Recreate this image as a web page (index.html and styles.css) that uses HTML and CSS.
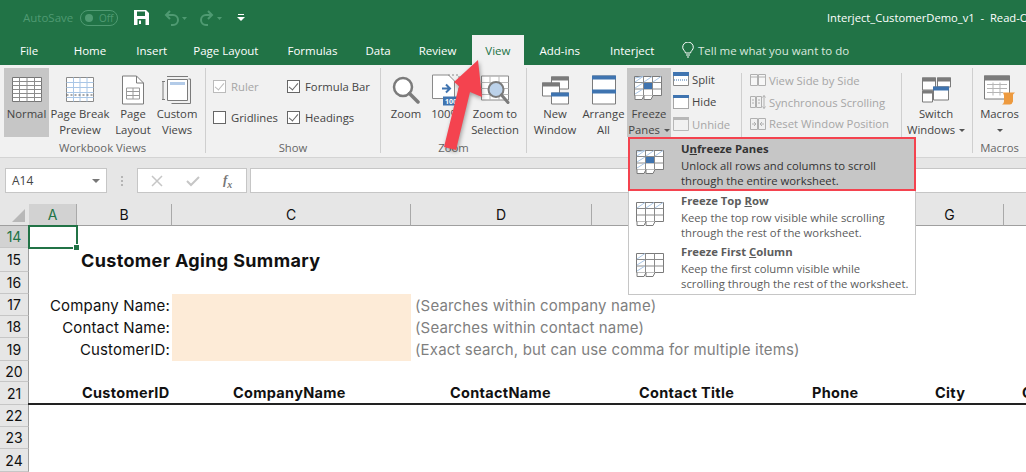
FILE: index.html
```html
<!DOCTYPE html>
<html lang="en">
<head>
<meta charset="UTF-8" />
<title>Interject_CustomerDemo_v1 - Read-Only</title>
<link rel="stylesheet" href="styles.css">
</head>
<body>
<svg class="defs" width="0" height="0">
  <symbol id="freeze-base" viewBox="0 0 30 28">
    <path d="M.5.5h27v19h-27z" fill="#fff" stroke="#7b7b7b"/>
    <path d="M.5 6.5h27M.5 13h27M9.5.5v19M18.5.5v19" fill="none" stroke="#8a8a8a"/>
    <path d="M1 19.5v4h7l2-4M10 19.5v4h7l2-4" fill="#fff" stroke="#7b7b7b"/>
  </symbol>
</svg>

<div class="app">
  <div class="titlebar">
    <span class="autosave">AutoSave</span>
    <span class="toggle"><i></i>Off</span>
    <svg class="qat-save" width="15" height="15" viewBox="0 0 15 15"><path fill="#fff" fill-rule="evenodd" d="M0 0h12l3 3v12H0zM3 1.500v4.500h8V1.500zM3.500 9v6h8V9zM5 10.500h2V14H5z"/></svg>
    <svg class="qat-undo" width="24" height="16" viewBox="0 0 24 16"><path d="M6 1 2 5l4 4M2 5h7a5 5 0 0 1 0 10H7" fill="none" stroke="#4f9a72" stroke-width="2"/><path d="M18 7h5l-2.500 3z" fill="#4f9a72"/></svg>
    <svg class="qat-redo" width="24" height="16" viewBox="0 0 24 16"><path d="M9 1l4 4-4 4M13 5H7a5 5 0 0 0 0 10h2" fill="none" stroke="#4f9a72" stroke-width="2"/><path d="M18 7h5l-2.500 3z" fill="#4f9a72"/></svg>
    <svg class="qat-more" width="8" height="7" viewBox="0 0 8 7"><path d="M1 0h6v1H1zM0 3h8L4 7z" fill="#fff"/></svg>
    <span class="doc-title">Interject_CustomerDemo_v1&nbsp; -&nbsp; Read-Only</span>
  </div>

  <div class="tabs">
    <span class="tab tab-file">File</span>
    <span class="tab">Home</span>
    <span class="tab">Insert</span>
    <span class="tab">Page Layout</span>
    <span class="tab">Formulas</span>
    <span class="tab">Data</span>
    <span class="tab">Review</span>
    <span class="tab active">View</span>
    <span class="tab">Add-ins</span>
    <span class="tab">Interject</span>
    <svg class="bulb" width="12" height="16" viewBox="0 0 12 16"><path d="M3.500 11C3 8.500.7 8 .7 5.300a5.300 5.300 0 0 1 10.600 0C11.300 8 9 8.500 8.500 11zM4 13h4M5 15h2" fill="none" stroke="#fff"/></svg>
    <span class="tellme">Tell me what you want to do</span>
  </div>

  <div class="ribbon">
    <div class="group g-views">
      <div class="group-body">
        <div class="big w45 pressed">
          <svg width="30" height="26" viewBox="0 0 30 26"><path d="M.5.5h29v24H.5z" fill="#fff" stroke="#767676"/><path d="M.5 4.500h29M.5 8.500h29M.5 12.500h29M.5 16.500h29M.5 20.500h29M7.500.5v24M15 .5v24M22.500.5v24" fill="none" stroke="#8c8c8c"/></svg>
          <span>Normal</span>
        </div>
        <div class="big w60">
          <svg width="28" height="26" viewBox="0 0 28 26"><path d="M.5.5h27v24H.5z" fill="#fff" stroke="#8a8a8a"/><path d="M.5 5.500h27M.5 10.500h27M.5 15.500h27M.5 20.500h27M7.500.5v24M14 .5v24M21 .5v24" fill="none" stroke="#a9c6e6"/><path d="M.5 18h27" stroke="#555" stroke-dasharray="2 2" fill="none"/></svg>
          <span>Page Break<br>Preview</span>
        </div>
        <div class="big w42">
          <svg width="22" height="29" viewBox="0 0 22 29"><path d="M.5.5h14l7 7v21H.5z" fill="#fff" stroke="#7b7b7b"/><path d="M14.500.5v7h7" fill="none" stroke="#7b7b7b"/><path d="M4.500 12.500h13v11h-13zM4.500 16h13M4.500 20h13M11 12.500v11" fill="none" stroke="#9a9a9a"/></svg>
          <span>Page<br>Layout</span>
        </div>
        <div class="big w46">
          <svg width="30" height="28" viewBox="0 0 30 28"><path d="M5 .5h21M1 5v19M.0 5.500h3M0 23.500h3" fill="none" stroke="#7b7b7b"/><path d="M9.500 27.500h19V3h-2" fill="none" stroke="#7b7b7b"/><path d="M5.500 3.500h20v21h-20z" fill="#fff" stroke="#7b7b7b"/><path d="M8 6h15v3H8z" fill="#b3cbe8"/></svg>
          <span>Custom<br>Views</span>
        </div>
      </div>
      <div class="group-label">Workbook Views</div>
    </div>

    <div class="group g-show">
      <div class="checks">
        <label class="check off"><i class="box ticked"></i>Ruler</label>
        <label class="check"><i class="box ticked"></i>Formula Bar</label>
        <label class="check"><i class="box"></i>Gridlines</label>
        <label class="check"><i class="box ticked"></i>Headings</label>
      </div>
      <div class="group-label">Show</div>
    </div>

    <div class="group g-zoom">
      <div class="group-body">
        <div class="big w36">
          <svg width="28" height="28" viewBox="0 0 28 28"><circle cx="11" cy="11" r="9" fill="#fff" stroke="#7b7b7b" stroke-width="2.500"/><path d="M17.500 17.500 26 26" stroke="#7b7b7b" stroke-width="3.500" stroke-linecap="round"/></svg>
          <span>Zoom</span>
        </div>
        <div class="big w38">
          <svg width="28" height="31" viewBox="0 0 28 31"><path d="M.5.5h16l6 6V24H.5z" fill="#fff" stroke="#8a8a8a"/><path d="M16 .5h11v18" fill="none" stroke="#8a8a8a" stroke-dasharray="2 2"/><path d="M10 14h8M14 10l4 4-4 4" fill="none" stroke="#3f74b0" stroke-width="2"/><path d="M11 22h17v9H11z" fill="#3f74b0"/><text class="pct" x="13" y="29">100</text></svg>
          <span>100%</span>
        </div>
        <div class="big w50">
          <svg width="29" height="29" viewBox="0 0 29 29"><path d="M.5.5h27v24H.5z" fill="#fff" stroke="#8a8a8a"/><path d="M.5 7h27M.5 13h27M.5 19h27M9 .5v24M18 .5v24" fill="none" stroke="#b9b9b9"/><circle cx="15" cy="14" r="7.500" fill="#bcd2ea" stroke="#7b7b7b" stroke-width="2"/><path d="M20.500 19.500 27 27" stroke="#7b7b7b" stroke-width="3" stroke-linecap="round"/></svg>
          <span>Zoom to<br>Selection</span>
        </div>
      </div>
      <div class="group-label">Zoom</div>
    </div>

    <div class="group g-window">
      <div class="group-body">
        <div class="big w46 new-window">
          <svg width="27" height="29" viewBox="0 0 27 29"><path d="M9.500 1.500h17v12h-17z" fill="#fff" stroke="#7b7b7b"/><path d="M9 1h18v4H9z" fill="#7b7b7b"/><path d="M.5 7.500h17v13H.5z" fill="#fff" stroke="#7b7b7b"/><path d="M0 7h18v4H0z" fill="#7b7b7b"/><path d="M9.500 17.500h17v11h-17z" fill="#fff" stroke="#7b7b7b"/><path d="M9 17h18v4H9z" fill="#3f74b0"/></svg>
          <span>New<br>Window</span>
        </div>
        <div class="big w43">
          <svg width="24" height="29" viewBox="0 0 24 29"><path d="M.5.5h23v28H.5z" fill="#fff" stroke="#7b7b7b"/><path d="M0 0h24v4H0zM0 14h24v4H0z" fill="#3f74b0"/></svg>
          <span>Arrange<br>All</span>
        </div>
        <div class="big w44 pressed freeze">
          <svg width="30" height="28" viewBox="0 0 30 28"><use href="#freeze-base"/><path d="M1 2 9 .5M1 6l8-5.500M10 6l8-5.500M19 6l8-5.500M1 12l8-5M1 18l8-5" stroke="#a9c6e6" fill="none"/><path d="M10 7h8v6h-8z" fill="#3f74b0"/></svg>
          <span>Freeze<br>Panes <b class="caret"></b></span>
        </div>
        <div class="smalls">
          <div class="small"><svg width="16" height="14" viewBox="0 0 16 14"><path d="M.5.5h15v13H.5z" fill="#fff" stroke="#8a8a8a"/><path d="M0 0h16v4H0z" fill="#3f74b0"/><path d="M1 8h14" stroke="#3f74b0" stroke-dasharray="1 1"/></svg>Split</div>
          <div class="small"><svg width="16" height="14" viewBox="0 0 16 14"><path d="M.5.5h15v13H.5z" fill="#fff" stroke="#555" stroke-dasharray="1 1"/><path d="M0 0h16v3H0z" fill="#3f74b0"/></svg>Hide</div>
          <div class="small off"><svg width="16" height="14" viewBox="0 0 16 14"><path d="M.5.5h15v13H.5z" fill="#f1f1f1" stroke="#b8b8b8"/><path d="M0 0h16v3H0z" fill="#b8b8b8"/></svg>Unhide</div>
        </div>
        <div class="smalls side">
          <div class="small off"><svg width="16" height="12" viewBox="0 0 16 12"><path d="M.5.5h7v11h-7zM8.500.5h7v11h-7zM.5 3h7M8.500 3h7" fill="#f7f7f7" stroke="#b0b0b0"/></svg>View Side by Side</div>
          <div class="small off"><svg width="16" height="14" viewBox="0 0 16 14"><path d="M.5 1.500h5v11h-5zM6.500 1.500h5v11h-5zM2 5h2M2 8h2M8 5h2M8 8h2M14 .5v13M12.500 2.500 14 .5l1.500 2M12.500 11.500l1.500 2 1.500-2" fill="none" stroke="#b0b0b0"/></svg>Synchronous Scrolling</div>
          <div class="small off"><svg width="16" height="12" viewBox="0 0 16 12"><path d="M.5.5h7v11h-7zM8.500.5h7v11h-7zM2 6h4M4 4l2 2-2 2M14 6h-4M12 4l-2 2 2 2" fill="none" stroke="#b0b0b0"/></svg>Reset Window Position</div>
        </div>
        <div class="big w60 switch">
          <svg width="29" height="25" viewBox="0 0 29 25"><path d="M.5.5h13v12H.5zM15.500.5h13v9h-13zM.5 13.500h10v11H.5z" fill="#fff" stroke="#7b7b7b"/><path d="M0 0h14v4H0zM15 0h14v4H15zM0 13h11v3H0z" fill="#7b7b7b"/><path d="M11.500 9.500h15v13h-15z" fill="#fff" stroke="#7b7b7b"/><path d="M11 9h16v4H11z" fill="#3f74b0"/></svg>
          <span>Switch<br>Windows <b class="caret"></b></span>
        </div>
      </div>
    </div>

    <div class="group g-macros">
      <div class="group-body">
        <div class="big w54">
          <svg width="31" height="29" viewBox="0 0 31 29"><path d="M.5.5h25v23H.5z" fill="#fff" stroke="#7b7b7b"/><path d="M0 0h26v5H0z" fill="#7b7b7b"/><path d="M3 9h20M3 13h20M3 17h16M9 7v13M16 7v13" stroke="#b5b5b5" fill="none"/><path d="M19 17h12l-2 2v7q-1 3-3 3h-8q2-1 2-3v-6z" fill="#ed9a3f"/></svg>
          <span>Macros<br><b class="caret"></b></span>
        </div>
      </div>
      <div class="group-label">Macros</div>
    </div>
  </div>

  <div class="formula-bar">
    <div class="namebox">A14<b class="caret"></b></div>
    <span class="dots"></span>
    <div class="fx-box">
      <svg width="12" height="12" viewBox="0 0 12 12"><path d="M1 1l10 10M11 1 1 11" stroke="#c6c6c6" stroke-width="1.500"/></svg>
      <svg width="14" height="12" viewBox="0 0 14 12"><path d="M1 6l4 4 8-8" fill="none" stroke="#c6c6c6" stroke-width="2"/></svg>
      <i>f<sub>x</sub></i>
    </div>
    <div class="fx-input"></div>
  </div>

  <div class="sheet">
    <div class="corner"></div>
    <div class="colhead sel">A</div>
    <div class="colhead">B</div>
    <div class="colhead">C</div>
    <div class="colhead">D</div>
    <div class="colhead"></div>
    <div class="colhead"></div>
    <div class="colhead">G</div>
    <div class="colhead last"></div>

    <div class="rowhead sel">14</div>
    <div class="cell-active"><i></i></div>
    <div class="rest"></div>

    <div class="rowhead">15</div>
    <div class="report-title">Customer Aging Summary</div>

    <div class="rowhead">16</div>
    <div class="rest wide"></div>

    <div class="rowhead">17</div>
    <div class="field-label">Company Name:</div>
    <div class="field-input"></div>
    <div class="hint">(Searches within company name)</div>

    <div class="rowhead">18</div>
    <div class="field-label">Contact Name:</div>
    <div class="field-input"></div>
    <div class="hint">(Searches within contact name)</div>

    <div class="rowhead">19</div>
    <div class="field-label">CustomerID:</div>
    <div class="field-input"></div>
    <div class="hint">(Exact search, but can use comma for multiple items)</div>

    <div class="rowhead">20</div>
    <div class="rest wide"></div>

    <div class="rowhead">21</div>
    <div class="rest under"></div>
    <div class="th th-b">CustomerID</div>
    <div class="th th-c">CompanyName</div>
    <div class="th th-d">ContactName</div>
    <div class="th th-e">Contact Title</div>
    <div class="th th-f">Phone</div>
    <div class="th th-g">City</div>
    <div class="th th-h">C</div>

    <div class="rowhead">22</div>
    <div class="rest wide"></div>
    <div class="rowhead">23</div>
    <div class="rest wide"></div>
    <div class="rowhead">24</div>
    <div class="rest wide"></div>
  </div>

  <div class="menu">
    <div class="menu-item current">
      <svg width="30" height="28" viewBox="0 0 30 28"><use href="#freeze-base"/><path d="M1 2 9 .5M1 6l8-5.500M10 6l8-5.500M19 6l8-5.500M1 12l8-5M1 18l8-5" stroke="#a9c6e6" fill="none"/><path d="M10 7h8v6h-8z" fill="#3f74b0"/></svg>
      <div><h4>U<u>n</u>freeze Panes</h4><p>Unlock all rows and columns to scroll<br>through the entire worksheet.</p></div>
    </div>
    <div class="menu-item">
      <svg width="30" height="28" viewBox="0 0 30 28"><use href="#freeze-base"/><path d="M1 6l8-5.500M10 6l8-5.500M19 6l8-5.500" stroke="#a9c6e6" fill="none"/></svg>
      <div><h4>Freeze Top <u>R</u>ow</h4><p>Keep the top row visible while scrolling<br>through the rest of the worksheet.</p></div>
    </div>
    <div class="menu-item">
      <svg width="30" height="28" viewBox="0 0 30 28"><use href="#freeze-base"/><path d="M1 6l8-5.500M1 12l8-5M1 18l8-5" stroke="#a9c6e6" fill="none"/></svg>
      <div><h4>Freeze First <u>C</u>olumn</h4><p>Keep the first column visible while<br>scrolling through the rest of the worksheet.</p></div>
    </div>
  </div>

  <svg class="arrow" width="50" height="100" viewBox="0 0 50 100"><path d="M38 2 42 39 30 34 16 92 4 89 19 28 14 24z" fill="#f4434f"/></svg>
</div>
</body>
</html>
```

FILE: styles.css
```css
html, body {
  margin: 0;
  height: 100%;
  overflow: hidden;
}
.defs {
  position: absolute;
}
.app {
  position: relative;
  width: 1026px;
  height: 472px;
  overflow: hidden;
  background: #e6e6e6;
  font-family: "Open Sans", "Noto Sans", sans-serif;
  font-size: 11.5px;
  color: #444;
}

/* title bar */
.titlebar {
  display: flex;
  align-items: center;
  height: 35px;
  background: #217346;
  color: #fff;
  white-space: nowrap;
}
.titlebar > * {
  flex-shrink: 0;
}
.autosave {
  box-sizing: border-box;
  margin-left: 23px;
  width: 57px;
  color: #4f9a72;
  font-size: 11.5px;
}
.toggle {
  display: flex;
  align-items: center;
  box-sizing: border-box;
  width: 38px;
  height: 16px;
  padding-left: 4px;
  border: 1px solid #4f9a72;
  border-radius: 8px;
  color: #4f9a72;
  font-size: 10px;
}
.toggle i {
  width: 8px;
  height: 8px;
  margin-right: 6px;
  border-radius: 50%;
  background: #4f9a72;
}
.qat-save { margin-left: 16px; }
.qat-undo { margin-left: 15px; }
.qat-redo { margin-left: 11px; }
.qat-more { margin-left: 14px; }
.doc-title {
  margin-left: 582px;
  font-size: 11.2px;
}

/* tabs */
.tabs {
  display: flex;
  align-items: center;
  height: 30px;
  background: #217346;
  color: #fff;
  white-space: nowrap;
}
.tab {
  display: flex;
  align-items: center;
  height: 30px;
  padding: 0 14.500px;
}
.tab-file {
  padding-left: 20px;
  padding-right: 21px;
}
.tab:nth-child(2) { padding-right: 15.500px; }
.tab:nth-child(3) { padding-right: 11.500px; }
.tab:nth-child(5) { padding-right: 13.500px; }
.tab:nth-child(6) { padding-right: 13.500px; }
.tab:nth-child(9) { padding-right: 15.500px; }
.tab.active {
  margin: 0 1px;
  padding: 0 13.500px;
  background: #f1f1f1;
  color: #217346;
}
.bulb { margin-left: 13px; }
.tellme {
  margin-left: 4px;
  color: #d9e8df;
}

/* ribbon */
.ribbon {
  display: flex;
  box-sizing: border-box;
  height: 93px;
  padding-top: 3px;
  background: #f1f1f1;
  border-bottom: 1px solid #d4d4d4;
  font-size: 11.3px;
  white-space: nowrap;
}
.group {
  box-sizing: border-box;
  flex-shrink: 0;
  height: 85px;
  border-right: 1px solid #cfcfcf;
}
.g-views { width: 206px; padding-left: 4px; }
.g-show { width: 175px; }
.g-zoom { width: 146px; padding-left: 6px; }
.g-window { width: 446px; padding-left: 5px; }
.g-macros { width: 53px; border-right: 0; }
.group-body {
  display: flex;
  height: 69px;
}
.group-label {
  height: 16px;
  margin-top: 3px;
  line-height: 16px;
  text-align: center;
  color: #666;
}
.g-views .group-label { margin-left: -4px; }
.g-zoom .group-label { margin-left: -6px; }
.big {
  display: flex;
  flex-direction: column;
  align-items: center;
  flex-shrink: 0;
  box-sizing: border-box;
  height: 69px;
  padding-top: 6px;
  line-height: 16px;
  text-align: center;
}
.big svg {
  height: 32px;
  flex-shrink: 0;
}
.big span {
  display: block;
}
.pct {
  fill: #fff;
  font-size: 7px;
  font-weight: bold;
}
.w36 { width: 38px; }
.w38 { width: 41px; margin-right: 2px; }
.w42 { width: 42px; }
.w43 { width: 43px; margin-right: 2px; }
.w44 { width: 44px; }
.w45 { width: 45px; margin-right: 1px; }
.w46 { width: 46px; margin-right: 2px; }
.w50 { width: 50px; margin-left: 2px; }
.w54 { width: 53px; }
.w60 { width: 60px; margin-right: 2px; }
.new-window { margin-right: 4px; }
.pressed {
  background: #c6c6c6;
}
.switch {
  margin-left: 4px;
}
.caret {
  display: inline-block;
  width: 0;
  height: 0;
  margin-left: 1px;
  vertical-align: middle;
  border: 3px solid transparent;
  border-top-color: #555;
  border-bottom: 0;
}

/* show group */
.checks {
  display: grid;
  grid-template-columns: 74px auto;
  grid-auto-rows: 31px;
  height: 69px;
  padding: 3px 0 0 7px;
  box-sizing: border-box;
}
.check {
  display: flex;
  align-items: center;
}
.check.off { color: #a6a6a6; }
.box {
  position: relative;
  box-sizing: border-box;
  width: 13px;
  height: 13px;
  margin-right: 5px;
  border: 1px solid #666;
  background: #fff;
}
.check.off .box { border-color: #bbb; }
.box.ticked::after {
  content: "";
  position: absolute;
  left: 3px;
  top: 0;
  width: 4px;
  height: 8px;
  border: solid #666;
  border-width: 0 1.500px 1.500px 0;
  transform: rotate(40deg);
}
.check.off .box.ticked::after { border-color: #bbb; }

/* small buttons */
.smalls {
  display: flex;
  flex-direction: column;
  width: 70px;
  padding: 0 0 0 2px;
  box-sizing: border-box;
  flex-shrink: 0;
}
.smalls.side {
  width: 161px;
  height: 65px;
  margin-top: 5px;
  padding-left: 8px;
  border-left: 1px solid #cfcfcf;
  border-right: 1px solid #cfcfcf;
}
.small {
  display: flex;
  align-items: center;
  gap: 3px;
  height: 22.500px;
}
.smalls.side .small {
  position: relative;
  top: -3.500px;
}
.small.off { color: #a6a6a6; }

/* formula bar */
.formula-bar {
  display: flex;
  align-items: center;
  height: 25px;
  margin-top: 10px;
}
.namebox {
  display: flex;
  align-items: center;
  justify-content: space-between;
  box-sizing: border-box;
  width: 102px;
  height: 25px;
  margin-left: 5px;
  padding: 0 6px;
  border: 1px solid #c6c6c6;
  background: #fff;
  font-size: 12px;
}
.namebox .caret {
  border-width: 4px;
  border-bottom: 0;
  border-top-color: #777;
}
.dots {
  width: 0;
  height: 10px;
  margin: 0 14px;
  border-left: 2px dotted #b5b5b5;
}
.fx-box {
  display: flex;
  align-items: center;
  gap: 23px;
  box-sizing: border-box;
  width: 110px;
  height: 25px;
  padding-left: 13px;
  border: 1px solid #c6c6c6;
  background: #fff;
}
.fx-box i {
  font-family: "Liberation Serif", serif;
  font-weight: bold;
  font-size: 13px;
  color: #777;
}
.fx-box sub {
  font-size: 10px;
}
.fx-input {
  flex: 1;
  height: 25px;
  margin-left: 3px;
  box-sizing: border-box;
  border: 1px solid #c6c6c6;
  border-right: 0;
  background: #fff;
}

/* sheet */
.sheet {
  display: grid;
  grid-template-columns: 29px 48px 95px 239px 181px 178px 126px 108px 22px;
  grid-template-rows: 22px 22px 24px 22px 22px 22px 23px 21px 23px 22px 22px 23px;
  margin-top: 11px;
  background: #fff;
  font-family: "Inter", "Open Sans", sans-serif;
  color: #111;
}
.corner {
  position: relative;
  background: #e6e6e6;
  border-bottom: 1px solid #9f9f9f;
  box-sizing: border-box;
  border-right: 1px solid #e6e6e6;
}
.corner::after {
  content: "";
  position: absolute;
  right: 3px;
  bottom: 3px;
  border: solid transparent;
  border-width: 0 0 13px 13px;
  border-bottom-color: #b8b8b8;
}
.colhead {
  box-sizing: border-box;
  display: flex;
  align-items: center;
  justify-content: center;
  background: #e6e6e6;
  border-right: 1px solid #a9a9a9;
  border-bottom: 1px solid #9f9f9f;
  font-size: 14px;
}
.colhead.last { border-right: 0; }
.colhead.sel {
  background: #d2d2d2;
  color: #217346;
}
.rowhead {
  grid-column: 1;
  box-sizing: border-box;
  display: flex;
  align-items: center;
  justify-content: center;
  background: #e6e6e6;
  border-right: 1px solid #9f9f9f;
  border-bottom: 1px solid #c6c6c6;
  font-size: 14px;
}
.rowhead.sel {
  background: #d2d2d2;
  color: #217346;
}
.cell-active {
  position: relative;
  box-sizing: border-box;
  grid-column: 2;
  margin: -1px -1px -1px -1px;
  border: 2px solid #217346;
}
.cell-active i {
  position: absolute;
  right: -4px;
  bottom: -4px;
  width: 5px;
  height: 5px;
  background: #217346;
  border: 1px solid #fff;
}
.rest {
  grid-column: 3 / -1;
}
.rest.wide {
  grid-column: 2 / -1;
}
.report-title {
  grid-column: 3 / -1;
  padding-left: 4px;
  font-size: 18px;
  font-weight: bold;
  letter-spacing: 0.35px;
  line-height: 25px;
}
.field-label {
  grid-column: 2 / 4;
  padding-right: 2px;
  text-align: right;
  font-size: 15px;
  letter-spacing: 0.15px;
  line-height: 24px;
}
.field-input {
  grid-column: 4;
  background: #fdebd7;
}
.hint {
  grid-column: 5 / -1;
  padding-left: 4px;
  color: #7f7f7f;
  font-size: 15px;
  letter-spacing: 0.15px;
  line-height: 24px;
  white-space: nowrap;
}
.under {
  grid-row: 9;
  grid-column: 2 / -1;
  margin-left: -1px;
  border-bottom: 2px solid #222;
}
.th {
  grid-row: 9;
  font-size: 14.500px;
  font-weight: bold;
  letter-spacing: 0.3px;
  line-height: 22px;
  white-space: nowrap;
  overflow: hidden;
}
.th-b { grid-column: 3; padding-left: 5px; }
.th-c { grid-column: 4; padding-left: 61px; }
.th-d { grid-column: 5; padding-left: 39px; }
.th-e { grid-column: 6; padding-left: 47px; }
.th-f { grid-column: 7; padding-left: 42px; }
.th-g { grid-column: 8; padding-left: 39px; }
.th-h { grid-column: 9; padding-left: 18px; }

/* dropdown over the sheet */
.menu {
  position: absolute;
  left: 628px;
  top: 137px;
  width: 288px;
  box-sizing: border-box;
  background: #fff;
  border: 1px solid #c6c6c6;
  color: #5c5c5c;
  font-size: 11.300px;
  line-height: 15px;
  padding-bottom: 2px;
}
.menu-item {
  display: flex;
  align-items: center;
  box-sizing: border-box;
  height: 50px;
  padding-left: 7px;
  gap: 15px;
  white-space: nowrap;
}
.menu-item:last-child {
  margin-top: 1px;
}
.menu-item.current {
  height: 54px;
  margin: -1px -1px 0;
  padding-left: 6px;
  border: 2px solid #f4434f;
  background: #c6c6c6;
  color: #333;
}
.menu-item h4 {
  margin: 0 0 2px;
  font-size: 11.300px;
  font-weight: bold;
}
.menu-item p {
  margin: 0;
}

.arrow {
  position: absolute;
  left: 440px;
  top: 58px;
  filter: drop-shadow(1px 2px 2px rgba(0,0,0,0.35));
}
```
